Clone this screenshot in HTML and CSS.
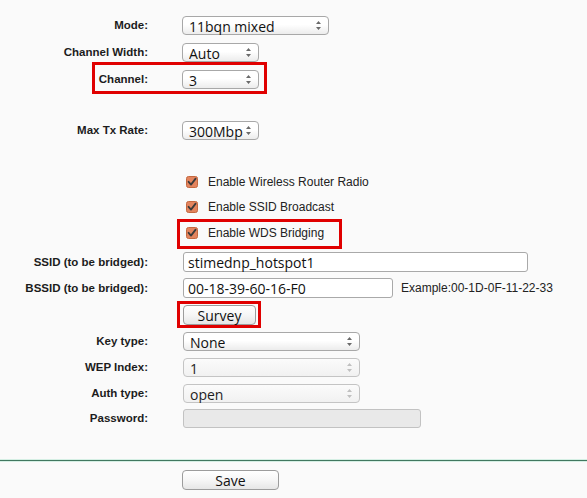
FILE: index.html
```html
<!DOCTYPE html>
<html>
<head>
<meta charset="utf-8">
<link rel="stylesheet" href="styles.css">
</head>
<body>
<div class="form">
  <div class="row r-mode">
    <div class="label">Mode:</div>
    <div class="select w-mode"><span>11bqn mixed</span><svg class="spin" width="7" height="11" viewBox="0 0 7 11"><path d="M1 4 L3.5 1 L6 4 Z M1 7 L3.5 10 L6 7 Z"/></svg></div>
  </div>
  <div class="row r-7">
    <div class="label">Channel Width:</div>
    <div class="select w-sm"><span>Auto</span><svg class="spin" width="7" height="11" viewBox="0 0 7 11"><path d="M1 4 L3.5 1 L6 4 Z M1 7 L3.5 10 L6 7 Z"/></svg></div>
  </div>
  <div class="row r-7">
    <div class="label">Channel:</div>
    <div class="select w-sm"><span>3</span><svg class="spin" width="7" height="11" viewBox="0 0 7 11"><path d="M1 4 L3.5 1 L6 4 Z M1 7 L3.5 10 L6 7 Z"/></svg></div>
  </div>
  <div class="row r-31">
    <div class="label">Max Tx Rate:</div>
    <div class="select w-sm"><span>300Mbp</span><svg class="spin" width="7" height="11" viewBox="0 0 7 11"><path d="M1 4 L3.5 1 L6 4 Z M1 7 L3.5 10 L6 7 Z"/></svg></div>
  </div>

  <div class="row r-32">
    <div class="label"></div>
    <div class="check"><svg class="cb" width="12" height="12" viewBox="0 0 12 12"><rect x="0.5" y="0.5" width="11" height="11" rx="2" class="cb-box"/><path d="M2.6 5.8 L5 8.6 L9.6 2.6" class="cb-mark"/></svg><span>Enable Wireless Router Radio</span></div>
  </div>
  <div class="row r-5">
    <div class="label"></div>
    <div class="check"><svg class="cb" width="12" height="12" viewBox="0 0 12 12"><rect x="0.5" y="0.5" width="11" height="11" rx="2" class="cb-box"/><path d="M2.6 5.8 L5 8.6 L9.6 2.6" class="cb-mark"/></svg><span>Enable SSID Broadcast</span></div>
  </div>
  <div class="row r-6">
    <div class="label"></div>
    <div class="check"><svg class="cb" width="12" height="12" viewBox="0 0 12 12"><rect x="0.5" y="0.5" width="11" height="11" rx="2" class="cb-box"/><path d="M2.6 5.8 L5 8.6 L9.6 2.6" class="cb-mark"/></svg><span>Enable WDS Bridging</span></div>
  </div>

  <div class="row r-9">
    <div class="label">SSID (to be bridged):</div>
    <div class="input w-ssid">stimednp_hotspot1</div>
  </div>
  <div class="row r-6">
    <div class="label">BSSID (to be bridged):</div>
    <div class="input w-bssid">00-18-39-60-16-F0</div>
    <div class="hint">Example:00-1D-0F-11-22-33</div>
  </div>
  <div class="row r-7">
    <div class="label"></div>
    <div class="button w-survey">Survey</div>
  </div>

  <div class="row r-6">
    <div class="label">Key type:</div>
    <div class="select w-key"><span>None</span><svg class="spin" width="7" height="11" viewBox="0 0 7 11"><path d="M1 4 L3.5 1 L6 4 Z M1 7 L3.5 10 L6 7 Z"/></svg></div>
  </div>
  <div class="row r-6">
    <div class="label">WEP Index:</div>
    <div class="select w-key disabled"><span>1</span><svg class="spin" width="7" height="11" viewBox="0 0 7 11"><path d="M1 4 L3.5 1 L6 4 Z M1 7 L3.5 10 L6 7 Z"/></svg></div>
  </div>
  <div class="row r-6">
    <div class="label">Auth type:</div>
    <div class="select w-key disabled"><span>open</span><svg class="spin" width="7" height="11" viewBox="0 0 7 11"><path d="M1 4 L3.5 1 L6 4 Z M1 7 L3.5 10 L6 7 Z"/></svg></div>
  </div>
  <div class="row r-5">
    <div class="label">Password:</div>
    <div class="input w-pass disabled"></div>
  </div>

  <div class="divider"></div>

  <div class="row r-8">
    <div class="label"></div>
    <div class="button w-save">Save</div>
  </div>

  <div class="mark mark-channel"></div>
  <div class="mark mark-wds"></div>
  <div class="mark mark-survey"></div>
</div>
</body>
</html>
```

FILE: styles.css
```css
html, body {
  margin: 0;
  padding: 0;
  background: #fafafa;
}
body {
  width: 587px;
  height: 498px;
  overflow: hidden;
  font-family: "Liberation Sans", Arial, sans-serif;
  color: #1a1a1a;
}
.form {
  position: relative;
  padding-top: 15px;
}
.row {
  display: flex;
  align-items: center;
  height: 20px;
}
.r-5 { margin-top: 5px; }
.r-6 { margin-top: 6px; }
.r-7 { margin-top: 7px; }
.r-8 { margin-top: 8px; }
.r-9 { margin-top: 9px; }
.r-31 { margin-top: 31px; }
.r-32 { margin-top: 32px; }

.label {
  width: 148px;
  margin-right: 34px;
  flex: none;
  text-align: right;
  font-weight: bold;
  font-size: 11.5px;
  color: #1c1c1c;
}

.select, .input, .button {
  box-sizing: border-box;
  height: 19px;
  font-family: "Open Sans", "DejaVu Sans", sans-serif;
  font-size: 14px;
  color: #111;
  flex: none;
}
.select {
  position: relative;
  display: flex;
  align-items: center;
  padding: 0 0 0 6px;
  border: 1px solid #a8a8a8;
  border-radius: 4px;
  background: linear-gradient(#ffffff, #ffffff 45%, #ececec);
  white-space: nowrap;
}
.select span {
  display: block;
  line-height: 17px;
  padding-top: 2px;
  max-width: calc(100% - 14px);
  overflow: hidden;
}
.select .spin {
  position: absolute;
  right: 6px;
  top: 3px;
  fill: #6a6a6a;
}
.select.disabled {
  border-color: #c4c4c4;
  background: linear-gradient(#fbfbfb, #f1f1f1);
}
.select.disabled .spin { fill: #c0c0c0; }
.select.disabled span { color: #1e1e1e; }

.w-mode { width: 147px; }
.w-sm { width: 77px; }
.w-key { width: 177px; margin-left: 1px; }

.input {
  height: 20px;
  border: 1px solid #a9a9a9;
  border-radius: 3px;
  background: #fff;
  padding: 0 0 0 4px;
  line-height: 20px;
  margin-left: 1px;
  white-space: nowrap;
}
.w-ssid { width: 345px; }
.w-bssid { width: 210px; }
.w-pass {
  width: 238px;
  height: 19px;
}
.input.disabled {
  background: #e9e9e9;
  border-color: #c2c2c2;
}
.hint {
  margin-left: 8px;
  font-size: 12px;
  color: #222;
}

.button {
  display: flex;
  align-items: center;
  justify-content: center;
  border: 1px solid #9c9c9c;
  border-radius: 4px;
  background: linear-gradient(#ffffff, #f6f6f6 50%, #e6e6e6);
  height: 20px;
  line-height: 18px;
  padding-top: 1px;
}
.w-survey { width: 73px; margin-left: 1px; }
.w-save { width: 97px; }

.check {
  display: flex;
  align-items: center;
  margin-left: 4px;
  font-size: 12px;
  color: #222;
}
.cb { margin-right: 10px; flex: none; }
.cb-box {
  fill: #e3845e;
  stroke: #c4683f;
  stroke-width: 1;
}
.cb-mark {
  fill: none;
  stroke: #3a3a3a;
  stroke-width: 1.8;
  stroke-linecap: round;
  stroke-linejoin: round;
}

.divider {
  margin-top: 31px;
  height: 1px;
  background: #41775f;
  border-top: 1px solid #d5efe4;
  border-bottom: 1px solid #d5efe4;
}

.mark {
  position: absolute;
  box-sizing: border-box;
  border: 3px solid #e00000;
}
.mark-channel { left: 92px; top: 62px; width: 175px; height: 32px; }
.mark-wds { left: 177px; top: 219px; width: 165px; height: 30px; }
.mark-survey { left: 177px; top: 301px; width: 84px; height: 27px; }
```
